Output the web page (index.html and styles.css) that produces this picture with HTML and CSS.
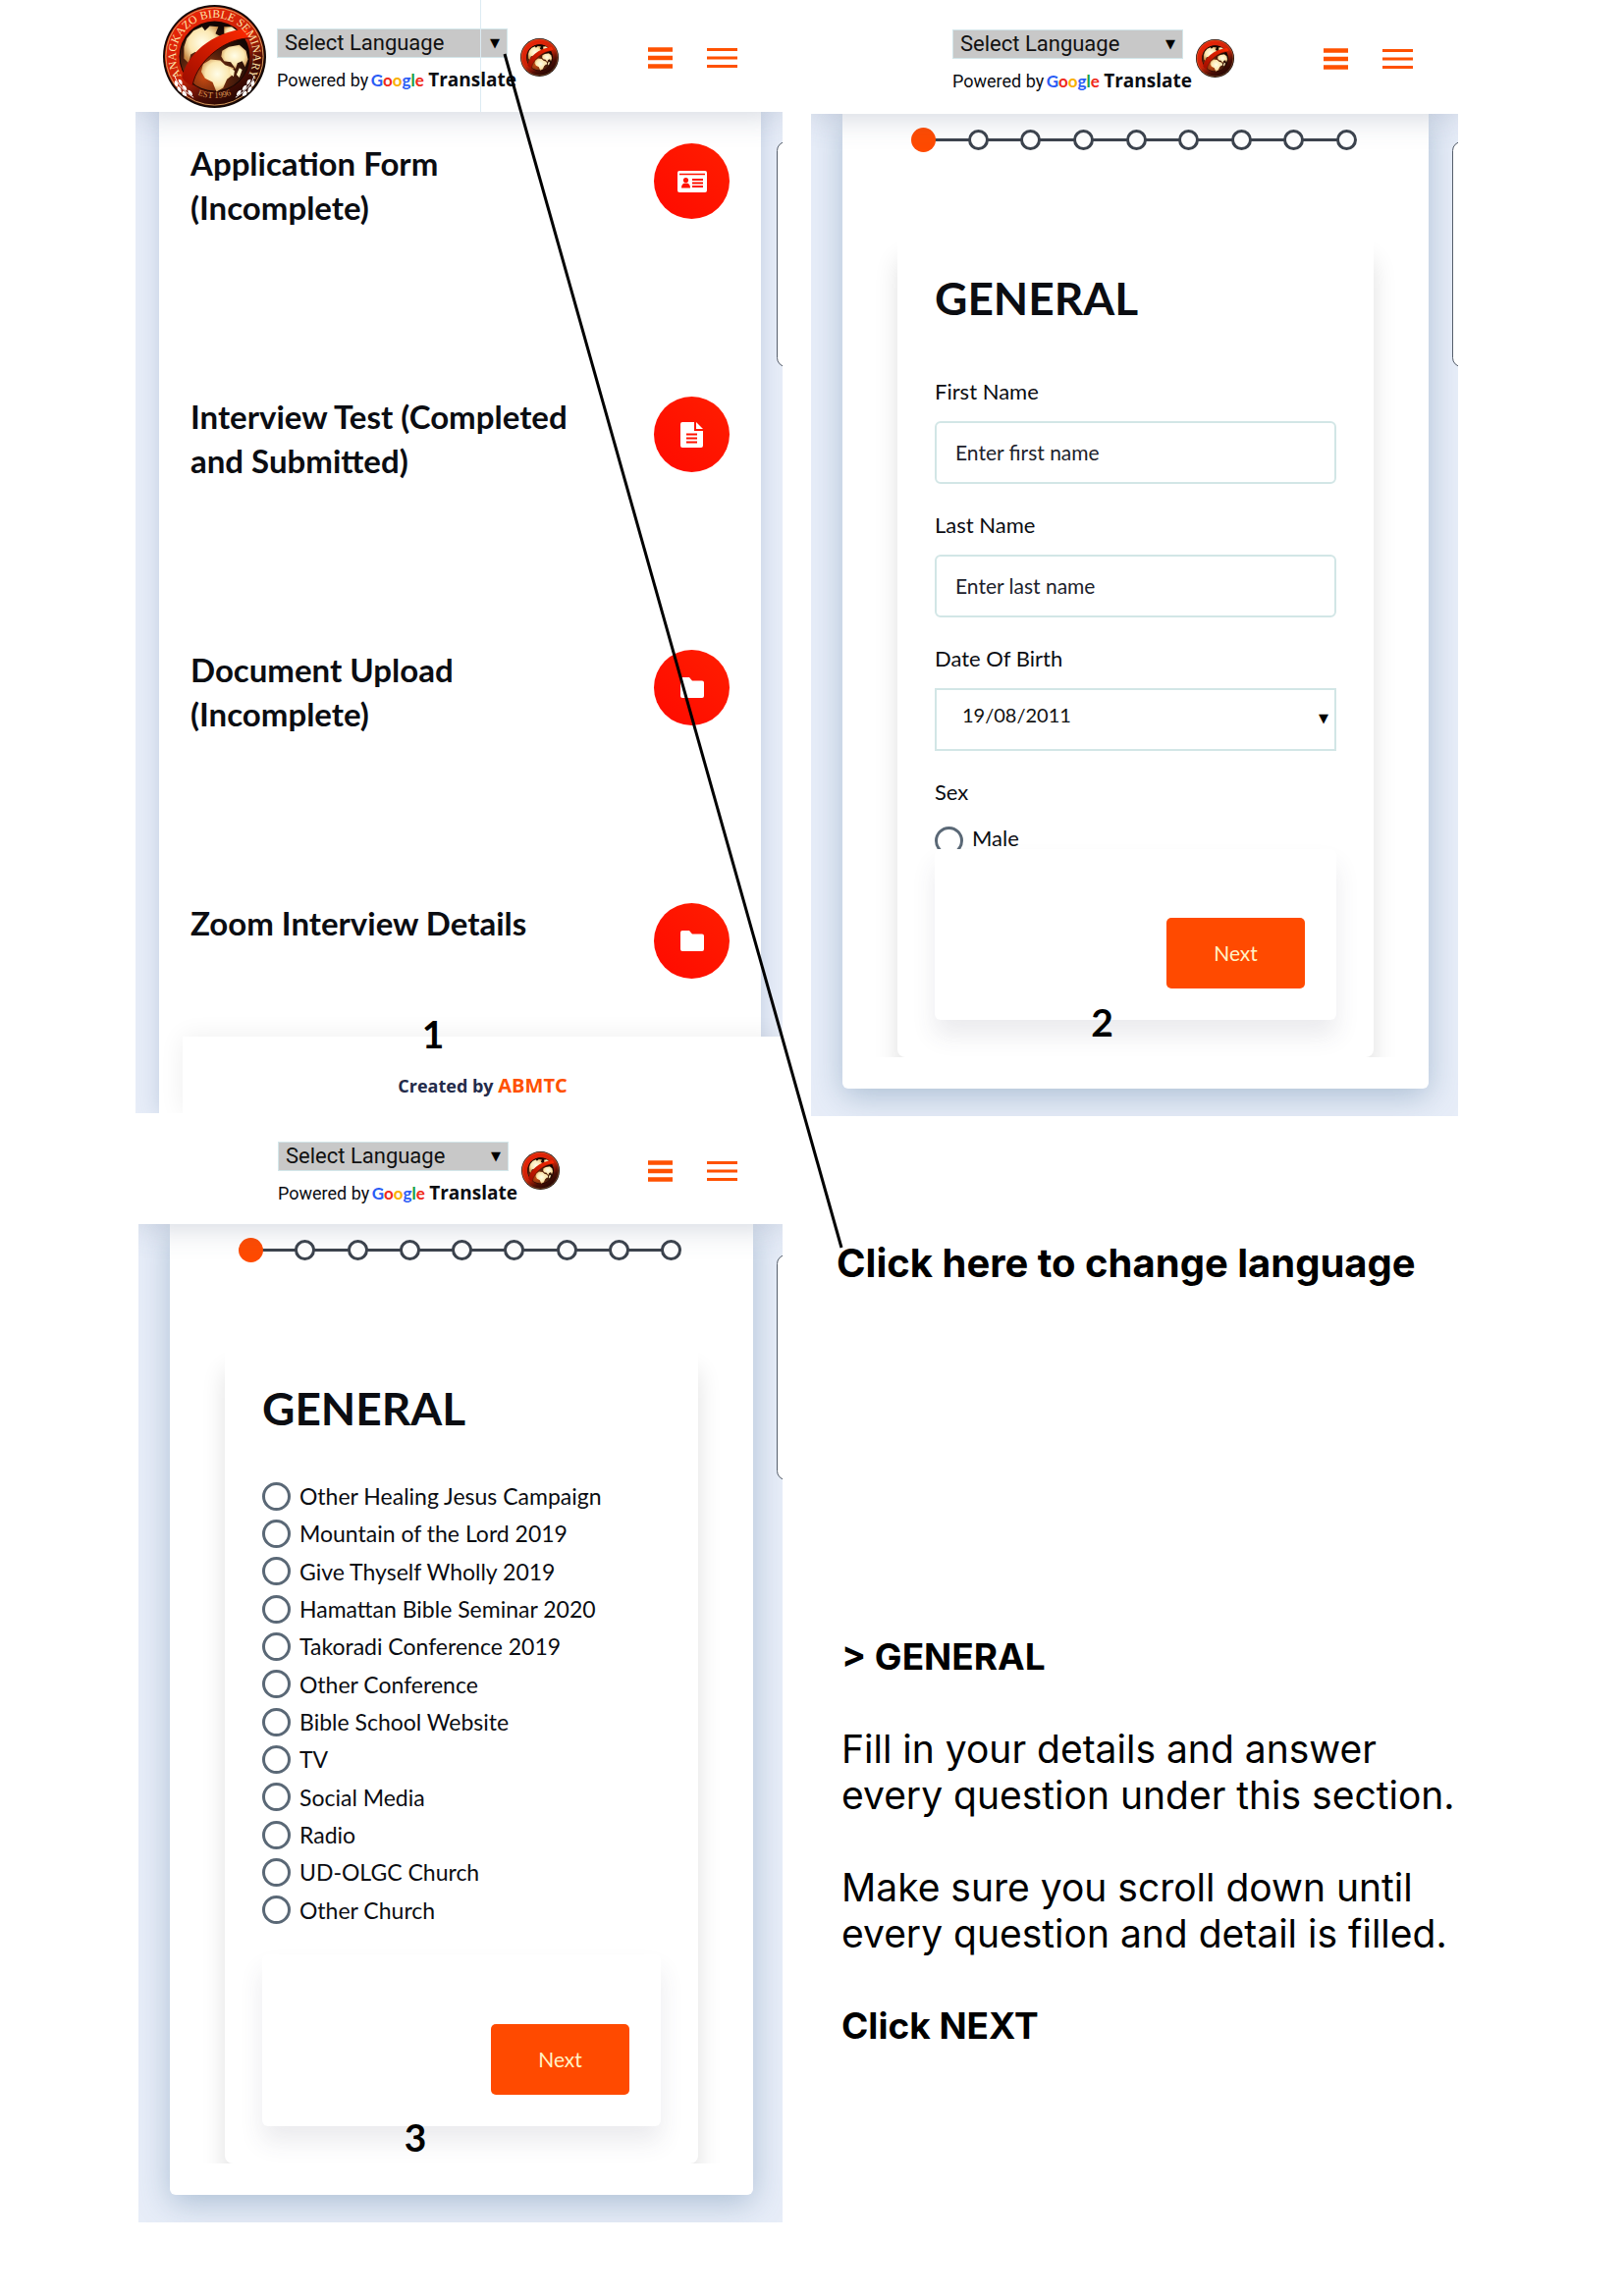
FILE: index.html
```html
<!DOCTYPE html>
<html lang="en">
<head>
<meta charset="utf-8">
<title>Application guide</title>
<link rel="stylesheet" href="styles.css">
</head>
<body>
<svg class="defs" aria-hidden="true">
  <defs>
    <radialGradient id="globe-fill" cx="50%" cy="45%" r="60%">
      <stop offset="0" stop-color="#fffde8"/><stop offset=".6" stop-color="#fbe7b0"/><stop offset="1" stop-color="#c98a45"/>
    </radialGradient>
    <radialGradient id="sea-fill" cx="35%" cy="80%" r="75%">
      <stop offset="0" stop-color="#c84a12"/><stop offset=".5" stop-color="#54200c"/><stop offset="1" stop-color="#120604"/>
    </radialGradient>
    <linearGradient id="ring-fill" x1=".2" y1="0" x2=".85" y2="1">
      <stop offset="0" stop-color="#ee2408"/><stop offset=".5" stop-color="#c92408"/><stop offset=".72" stop-color="#4a0d04"/><stop offset="1" stop-color="#120302"/>
    </linearGradient>
    <linearGradient id="band-fill" x1="1" y1="0" x2="0" y2="1">
      <stop offset="0" stop-color="#ff2a00"/><stop offset="1" stop-color="#9c0c00"/>
    </linearGradient>
    <symbol id="seal" viewBox="0 0 108 108">
      <circle cx="54" cy="54" r="54" fill="#140a08"/>
      <circle cx="54" cy="54" r="52" fill="url(#ring-fill)"/>
      <circle cx="54" cy="54" r="51" fill="none" stroke="#d8a060" stroke-width="1"/>
      <circle cx="54" cy="54" r="37" fill="#160603"/>
      <circle cx="54" cy="54" r="36" fill="url(#sea-fill)"/>
      <path fill="url(#globe-fill)" d="M22 44l3-9 7-8 9-4 3 4 5-5 9 1-3 7 5 3-6 7-7 3-2 7-7 4-4-5-5 3-2 9-5-5z"/>
      <path fill="url(#globe-fill)" d="M62 48l7-4 11-2 7 6 2 9-3 8-3-6-5 2-2 6-5-7-7-1-3-5z"/>
      <path fill="url(#globe-fill)" d="M64 23l8 0 8 6 2 4-9 1-9-4z"/>
      <path fill="url(#globe-fill)" d="M42 62l8-5 10 1 5 5 9 3-2 8-5 4-4 9-7 4-4-10-8-4-4-7z"/>
      <path fill="#fff0bd" d="M70 66l5 3-1 6-4-3zM80 66l3 2-3 8-3-3z"/>
      <path fill="url(#band-fill)" d="M20 76C24 54 50 28 88 25q4 5 4 10C66 34 36 58 31 84q-7-1-11-8z"/>
      <path fill="none" stroke="#3b0500" stroke-width="1" d="M31 84C36 58 66 34 92 35"/>
    </symbol>
    <symbol id="laurel" viewBox="0 0 24 26">
      <path d="M1 1q4 13 20 23" fill="none" stroke="#fff" stroke-width="1"/>
      <path fill="#fff" d="M2 6q-3 4 2 7 2-4-2-7zM5 12q-3 4 3 7 1-5-3-7zM10 17q-3 5 4 6 0-5-4-6zM5 5q5 0 4 6-4-2-4-6zM9 11q5 0 5 6-5-2-5-6zM15 16q5 1 5 6-5-1-5-6z"/>
    </symbol>
  </defs>
</svg>

<main class="page">
  <div class="column">
    <section class="panel panel-menu">
      <header class="topbar">
        <span class="brand">
          <svg class="brand-seal" viewBox="0 0 108 108" role="img" aria-label="Anagkazo Bible Seminary">
            <use href="#seal" width="108" height="108"/>
            <path id="seal-arc" d="M21.500 78A40.500 40.500 0 1 1 86.500 78" fill="none"/>
            <path id="seal-base" d="M30 91A46 46 0 0 0 78 91" fill="none"/>
            <text class="seal-name"><textPath href="#seal-arc" startOffset="50%">ANAGKAZO BIBLE SEMINARY</textPath></text>
            <text class="seal-year"><textPath href="#seal-base" startOffset="50%">EST 1996</textPath></text>
            <use href="#laurel" x="11" y="73" width="24" height="26"/>
            <use href="#laurel" x="-97" y="73" width="24" height="26" transform="scale(-1 1)"/>
          </svg>
        </span>
        <div class="translate">
          <span class="picker"><select aria-label="Language"><option>Select Language</option></select></span>
          <span class="powered">Powered by <b class="google"><i class="g-blue">G</i><i class="g-red">o</i><i class="g-yellow">o</i><i class="g-blue">g</i><i class="g-green">l</i><i class="g-red">e</i></b> <b class="tr">Translate</b></span>
        </div>
        <svg class="small-seal" viewBox="0 0 108 108" aria-hidden="true"><use href="#seal" width="108" height="108"/></svg>
        <nav class="burgers">
          <button type="button" aria-label="Sections"><svg width="25" height="22"><path d="M0 2.500h25M0 11h25M0 19.500h25" stroke="#ff5100" stroke-width="4.500"/></svg></button>
          <button type="button" aria-label="Menu"><svg width="31" height="22"><path d="M0 2.500h31M0 11h31M0 19.500h31" stroke="#ff5100" stroke-width="3.200"/></svg></button>
        </nav>
      </header>
      <div class="menu">
        <article class="task">
          <h2>Application Form (Incomplete)</h2>
          <span class="disc"><svg width="30" height="22" viewBox="0 0 30 22"><rect width="30" height="22" rx="2" fill="#fff"/><path d="M2 3.500h26" stroke="#ff1200" stroke-width="1.500"/><circle cx="8.500" cy="9.500" r="2.600" fill="#ff1200"/><path d="M4 17.500q0-5 4.500-5t4.500 5zM15 8h11v2H15zM15 11.500h11v2H15zM15 15h11v2H15z" fill="#ff1200"/></svg></span>
        </article>
        <article class="task">
          <h2>Interview Test (Completed and Submitted)</h2>
          <span class="disc"><svg width="24" height="26" viewBox="0 0 24 26"><path d="M2 0h12v9h9v15q0 2-2 2H2q-2 0-2-2V2q0-2 2-2z" fill="#fff"/><path d="M16 0l7 7h-7z" fill="#fff"/><path d="M6 12.500h11M6 16.500h11M6 20.500h11" stroke="#ff1200" stroke-width="1.800"/></svg></span>
        </article>
        <article class="task">
          <h2>Document Upload (Incomplete)</h2>
          <span class="disc"><svg width="24" height="21" viewBox="0 0 24 21"><path d="M2 0h7l3 3.500h10q2 0 2 2V19q0 2-2 2H2q-2 0-2-2V2q0-2 2-2z" fill="#fff"/></svg></span>
        </article>
        <article class="task task-last">
          <h2>Zoom Interview Details</h2>
          <span class="disc"><svg width="24" height="21" viewBox="0 0 24 21"><path d="M2 0h7l3 3.500h10q2 0 2 2V19q0 2-2 2H2q-2 0-2-2V2q0-2 2-2z" fill="#fff"/></svg></span>
        </article>
        <footer class="credit">Created by <a href="#">ABMTC</a></footer>
      </div>
      <span class="handle"></span>
      <span class="number number-one">1</span>
    </section>

    <section class="panel panel-third">
      <header class="topbar">
        <span class="brand"></span>
        <div class="translate">
          <span class="picker"><select aria-label="Language"><option>Select Language</option></select></span>
          <span class="powered">Powered by <b class="google"><i class="g-blue">G</i><i class="g-red">o</i><i class="g-yellow">o</i><i class="g-blue">g</i><i class="g-green">l</i><i class="g-red">e</i></b> <b class="tr">Translate</b></span>
        </div>
        <svg class="small-seal" viewBox="0 0 108 108" aria-hidden="true"><use href="#seal" width="108" height="108"/></svg>
        <nav class="burgers">
          <button type="button" aria-label="Sections"><svg width="25" height="22"><path d="M0 2.500h25M0 11h25M0 19.500h25" stroke="#ff5100" stroke-width="4.500"/></svg></button>
          <button type="button" aria-label="Menu"><svg width="31" height="22"><path d="M0 2.500h31M0 11h31M0 19.500h31" stroke="#ff5100" stroke-width="3.200"/></svg></button>
        </nav>
      </header>
      <div class="sheet">
        <ol class="steps"><li class="current"></li><li></li><li></li><li></li><li></li><li></li><li></li><li></li><li></li></ol>
        <div class="clip">
          <form class="form">
            <h1>GENERAL</h1>
            <div class="choices source">
              <label><input type="radio" name="source">Other Healing Jesus Campaign</label>
              <label><input type="radio" name="source">Mountain of the Lord 2019</label>
              <label><input type="radio" name="source">Give Thyself Wholly 2019</label>
              <label><input type="radio" name="source">Hamattan Bible Seminar 2020</label>
              <label><input type="radio" name="source">Takoradi Conference 2019</label>
              <label><input type="radio" name="source">Other Conference</label>
              <label><input type="radio" name="source">Bible School Website</label>
              <label><input type="radio" name="source">TV</label>
              <label><input type="radio" name="source">Social Media</label>
              <label><input type="radio" name="source">Radio</label>
              <label><input type="radio" name="source">UD-OLGC Church</label>
              <label><input type="radio" name="source">Other Church</label>
            </div>
            <div class="actions"><button type="button">Next</button></div>
          </form>
        </div>
      </div>
      <span class="handle"></span>
      <span class="number number-three">3</span>
    </section>
  </div>

  <div class="column">
    <section class="panel panel-second">
      <header class="topbar">
        <span class="brand"></span>
        <div class="translate">
          <span class="picker"><select aria-label="Language"><option>Select Language</option></select></span>
          <span class="powered">Powered by <b class="google"><i class="g-blue">G</i><i class="g-red">o</i><i class="g-yellow">o</i><i class="g-blue">g</i><i class="g-green">l</i><i class="g-red">e</i></b> <b class="tr">Translate</b></span>
        </div>
        <svg class="small-seal" viewBox="0 0 108 108" aria-hidden="true"><use href="#seal" width="108" height="108"/></svg>
        <nav class="burgers">
          <button type="button" aria-label="Sections"><svg width="25" height="22"><path d="M0 2.500h25M0 11h25M0 19.500h25" stroke="#ff5100" stroke-width="4.500"/></svg></button>
          <button type="button" aria-label="Menu"><svg width="31" height="22"><path d="M0 2.500h31M0 11h31M0 19.500h31" stroke="#ff5100" stroke-width="3.200"/></svg></button>
        </nav>
      </header>
      <div class="sheet">
        <ol class="steps"><li class="current"></li><li></li><li></li><li></li><li></li><li></li><li></li><li></li><li></li></ol>
        <div class="clip">
          <form class="form">
            <h1>GENERAL</h1>
            <div class="fields">
              <div class="field"><label for="first">First Name</label><input id="first" type="text" placeholder="Enter first name"></div>
              <div class="field"><label for="last">Last Name</label><input id="last" type="text" placeholder="Enter last name"></div>
              <div class="field"><label for="birth">Date Of Birth</label><span class="picker date"><select id="birth"><option>19/08/2011</option></select></span></div>
              <div class="field" role="radiogroup" aria-labelledby="sex"><span id="sex">Sex</span>
                <div class="choices cut"><label><input type="radio" name="sex">Male</label></div>
              </div>
            </div>
            <div class="actions"><button type="button">Next</button></div>
          </form>
        </div>
      </div>
      <span class="handle"></span>
      <span class="number number-two">2</span>
    </section>

    <section class="notes">
      <h2>Click here to change language</h2>
      <div class="guide">
        <h3>&gt; GENERAL</h3>
        <p>Fill in your details and answer<br>every question under this section.</p>
        <p>Make sure you scroll down until<br>every question and detail is filled.</p>
        <h3>Click NEXT</h3>
      </div>
    </section>
  </div>

  <svg class="pointer" viewBox="0 0 1654 2339" preserveAspectRatio="none" aria-hidden="true"><path d="M489.500 0V114" stroke="#dcebf2" stroke-width="1"/><path d="M514 55L857 1271" stroke="#000" stroke-width="3"/></svg>
</main>
</body>
</html>
```
FILE: styles.css
```css
* { box-sizing: border-box; }
body { margin: 0; background: #fff; color: #0b0d12; font: 22px/30px Lato, sans-serif; }
h1, h2, h3, p, ol { margin: 0; padding: 0; }
button, select, input { font: inherit; color: inherit; margin: 0; }
.defs { position: absolute; width: 0; height: 0; }

.page { position: relative; display: grid; grid-template-columns: 1fr 1fr; gap: 29px; padding: 0 169px 76px 138px; }
.column { min-width: 0; }
.panel { position: relative; background: #e7edf8; overflow: hidden; }
.panel-third { margin-left: 3px; }

.topbar { position: relative; z-index: 1; display: flex; align-items: flex-start; height: 114px; padding-right: 46px; background: #fff; box-shadow: 0 0 32px rgba(80, 95, 130, .3); }
.panel-second .topbar { height: 116px; padding-top: 1px; }
.panel-third .topbar { height: 113px; }
.brand { flex: none; width: 144px; padding: 5px 0 0 27px; }
.panel-third .brand { width: 142px; }
.brand-seal { display: block; width: 107px; height: 105px; }
.seal-name { font: 12px "Liberation Serif", serif; fill: #ffe3a8; text-anchor: middle; }
.seal-year { font: 9px "Liberation Serif", serif; fill: #d99a55; text-anchor: middle; }
.translate { flex: none; width: 248px; padding-top: 29px; }
.picker { position: relative; display: block; }
.picker::after { content: "▼"; position: absolute; right: 8px; top: 0; font: 13px/30px "DejaVu Sans", sans-serif; color: #000; pointer-events: none; }
.picker select { display: block; width: 235px; height: 30px; padding: 0 7px; border: 1px solid #d3e6ea; border-radius: 0; background: #c8c8c8; appearance: none; font: 22px/28px Roboto, sans-serif; color: #111; }
.translate .picker { width: 235px; }
.powered { display: block; margin-top: 8px; font: 18px/28px Roboto, sans-serif; white-space: nowrap; }
.google { margin-left: -2px; font: 700 17px/28px Lato, sans-serif; }
.google i { font-style: normal; }
.g-blue { color: #2a5cf5; } .g-red { color: #f02a1a; } .g-yellow { color: #f9b000; } .g-green { color: #12a045; }
.tr { font: 700 19px/28px "Open Sans", sans-serif; }
.small-seal { flex: none; width: 39px; height: 39px; margin-top: 39px; }
.burgers { display: flex; gap: 35px; margin: 48px 0 0 auto; }
.burgers button { display: block; padding: 0; border: 0; background: none; }
.burgers svg { display: block; }

.menu { margin: 0 22px 0 24px; background: #fff; box-shadow: 0 0 20px rgba(80, 110, 160, .25); }
.task { display: flex; justify-content: space-between; height: 258px; padding: 32px 32px 0 32px; }
.task-last { height: 168px; }
.task h2 { max-width: 420px; margin-top: -2px; font-size: 33px; line-height: 45px; font-weight: 700; }
.disc { flex: none; display: grid; place-items: center; width: 77px; height: 77px; border-radius: 50%; background: linear-gradient(45deg, #ff0a00, #ff1e00); }
.credit { position: relative; height: 78px; margin: 0 -22px 0 24px; background: #fff; box-shadow: 0 0 24px rgba(0, 0, 0, .07); font: 700 18px/100px "Open Sans", sans-serif; color: #232b4a; text-align: center; }
.credit a { font-size: 20px; color: #ff5100; text-decoration: none; }

.handle { position: absolute; right: -13px; top: 144px; width: 19px; height: 230px; border: 1px solid #555e6b; border-radius: 10px; background: #fff; }
.number { position: absolute; transform: translateX(-50%); font: 700 39px/38px Lato, sans-serif; color: #000; z-index: 2; }
.number-one { left: 46%; bottom: 62px; }
.number-two { left: 45%; bottom: 77px; }
.number-three { left: 43%; bottom: 68px; }

.sheet { margin: 0 30px 28px 32px; padding: 13px 0 32px; background: #fff; border-radius: 0 0 6px 6px; box-shadow: 0 8px 32px rgba(70, 110, 150, .36); }
.steps { display: flex; align-items: center; justify-content: space-between; height: 26px; margin: 0 73px 0 70px; list-style: none; background: linear-gradient(#3c434d, #3c434d) center / 96% 3px no-repeat; }
.steps li { width: 21px; height: 21px; border: 3px solid #3c434d; border-radius: 50%; background: #fff; }
.steps .current { width: 25px; height: 25px; border: 0; background: #ff4a00; }
.clip { overflow: hidden; padding: 85px 56px 0; }
.form { padding: 36px 38px 38px; border-radius: 8px; background: #fff; box-shadow: 0 24px 24px rgba(0, 0, 0, .12); }
.form h1 { font-size: 46px; line-height: 56px; font-weight: 700; }
.fields { display: grid; gap: 27px; padding-top: 52px; }
.field { display: grid; gap: 15px; }
.field input[type="text"] { width: 100%; height: 64px; padding: 0 19px 2px; border: 2px solid #d2e6e6; border-radius: 6px; background: #fff; font-size: 21px; }
.field input::placeholder { color: #1d222c; opacity: 1; }
.date select { width: 100%; height: 64px; padding: 0 26px 10px; border: 2px solid #d2e6e6; background: #fff; font: 20px/30px Lato, sans-serif; }
.date::after { line-height: 62px; }
.choices { overflow: hidden; }
.choices label { display: flex; align-items: center; gap: 9px; font-size: 23px; line-height: 30px; }
.choices input { appearance: none; flex: none; width: 29px; height: 29px; border: 3px solid #5a6876; border-radius: 50%; background: #fff; }
.cut { height: 28px; }
.cut label { align-items: flex-start; height: 28px; padding-top: 5px; font-size: 22px; line-height: 23px; }
.cut + .actions, .fields + .actions { padding-top: 70px; }
.source { display: grid; grid-auto-rows: 1fr; height: 460px; margin: 42px 0 26px; }
.actions { display: flex; justify-content: flex-end; padding: 71px 32px 32px; border-radius: 6px; background: #fff; box-shadow: 0 16px 24px rgba(60, 60, 90, .1); }
.actions button { width: 141px; height: 72px; border: 0; border-radius: 5px; background: #ff4a00; color: #fff3c4; font-size: 21px; }

.notes { padding: 126px 0 0 26px; font: 39px/47px Inter, sans-serif; color: #000; }
.notes h2 { font-size: 40px; line-height: 47px; font-weight: 700; white-space: nowrap; }
.notes h3 { font-size: 37px; line-height: 47px; font-weight: 700; }
.guide { display: grid; gap: 47px; padding: 354px 0 0 5px; white-space: nowrap; }

.pointer { position: absolute; left: 0; top: 0; width: 100%; height: 2339px; z-index: 3; pointer-events: none; }
```
